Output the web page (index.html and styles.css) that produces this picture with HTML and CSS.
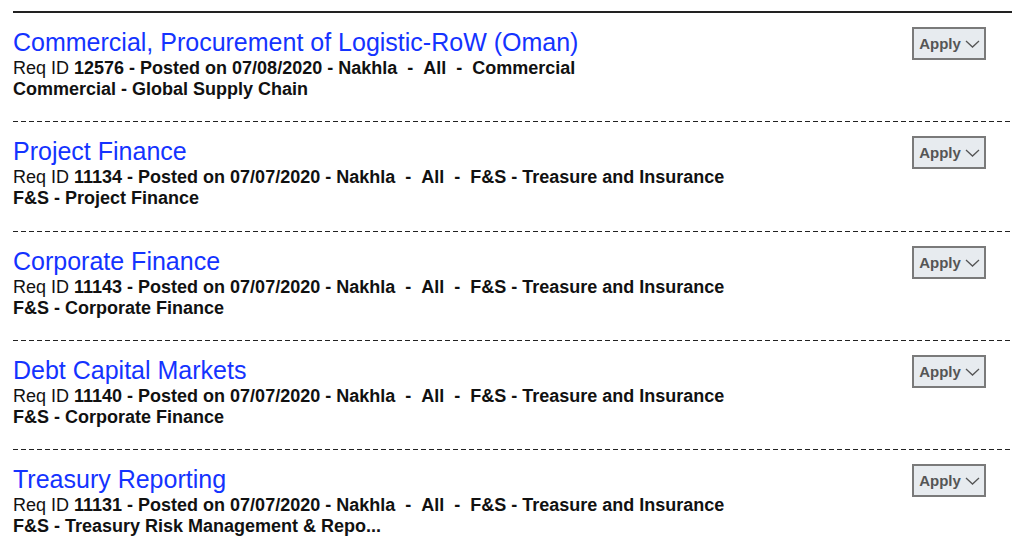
FILE: index.html
```html
<!DOCTYPE html>
<html>
<head>
<meta charset="utf-8">
<link rel="stylesheet" href="styles.css">
</head>
<body>
<ul class="jobs">
  <li class="job">
    <div class="info">
      <a class="title" href="#">Commercial, Procurement of Logistic-RoW (Oman)</a>
      <div class="meta">Req ID <b>12576 - Posted on 07/08/2020 - Nakhla &nbsp;- &nbsp;All &nbsp;- &nbsp;Commercial</b></div>
      <div class="meta"><b>Commercial - Global Supply Chain</b></div>
    </div>
    <button class="apply">Apply <svg class="chev" width="15" height="8" viewBox="0 0 15 8"><path d="M1 1 L7.5 7 L14 1" fill="none" stroke="#555" stroke-width="1.3"/></svg></button>
  </li>
  <li class="job">
    <div class="info">
      <a class="title" href="#">Project Finance</a>
      <div class="meta">Req ID <b>11134 - Posted on 07/07/2020 - Nakhla &nbsp;- &nbsp;All &nbsp;- &nbsp;F&amp;S - Treasure and Insurance</b></div>
      <div class="meta"><b>F&amp;S - Project Finance</b></div>
    </div>
    <button class="apply">Apply <svg class="chev" width="15" height="8" viewBox="0 0 15 8"><path d="M1 1 L7.5 7 L14 1" fill="none" stroke="#555" stroke-width="1.3"/></svg></button>
  </li>
  <li class="job">
    <div class="info">
      <a class="title" href="#">Corporate Finance</a>
      <div class="meta">Req ID <b>11143 - Posted on 07/07/2020 - Nakhla &nbsp;- &nbsp;All &nbsp;- &nbsp;F&amp;S - Treasure and Insurance</b></div>
      <div class="meta"><b>F&amp;S - Corporate Finance</b></div>
    </div>
    <button class="apply">Apply <svg class="chev" width="15" height="8" viewBox="0 0 15 8"><path d="M1 1 L7.5 7 L14 1" fill="none" stroke="#555" stroke-width="1.3"/></svg></button>
  </li>
  <li class="job">
    <div class="info">
      <a class="title" href="#">Debt Capital Markets</a>
      <div class="meta">Req ID <b>11140 - Posted on 07/07/2020 - Nakhla &nbsp;- &nbsp;All &nbsp;- &nbsp;F&amp;S - Treasure and Insurance</b></div>
      <div class="meta"><b>F&amp;S - Corporate Finance</b></div>
    </div>
    <button class="apply">Apply <svg class="chev" width="15" height="8" viewBox="0 0 15 8"><path d="M1 1 L7.5 7 L14 1" fill="none" stroke="#555" stroke-width="1.3"/></svg></button>
  </li>
  <li class="job">
    <div class="info">
      <a class="title" href="#">Treasury Reporting</a>
      <div class="meta">Req ID <b>11131 - Posted on 07/07/2020 - Nakhla &nbsp;- &nbsp;All &nbsp;- &nbsp;F&amp;S - Treasure and Insurance</b></div>
      <div class="meta"><b>F&amp;S - Treasury Risk Management &amp; Repo...</b></div>
    </div>
    <button class="apply">Apply <svg class="chev" width="15" height="8" viewBox="0 0 15 8"><path d="M1 1 L7.5 7 L14 1" fill="none" stroke="#555" stroke-width="1.3"/></svg></button>
  </li>
</ul>
</body>
</html>
```
FILE: styles.css
```css
html, body {
  margin: 0;
  padding: 0;
  background: #fff;
}
body {
  padding: 11px 12px 0 13px;
  font-family: "Liberation Sans", Arial, Helvetica, sans-serif;
  color: #111;
}
.jobs {
  list-style: none;
  margin: 0;
  padding: 0;
  border-top: 2px solid #222;
}
.job {
  display: flex;
  justify-content: space-between;
  align-items: flex-start;
  padding: 13px 26px 22.3px 0;
  background: linear-gradient(to right, #222 5px, transparent 5px) repeat-x;
  background-size: 8px 1px;
  background-position: 0 100%;
}
.job:last-child {
  background: none;
}
.info {
  display: flex;
  flex-direction: column;
}
.title {
  font-size: 25px;
  line-height: 32px;
  color: #1433ff;
  text-decoration: none;
}
.meta {
  font-size: 18px;
  line-height: 21px;
  color: #111;
}
.meta b {
  font-weight: 700;
}
.apply {
  margin-top: 1px;
  width: 74px;
  height: 33px;
  border: 2px solid #7a7a7a;
  background: #e7ebef;
  color: #555;
  font-family: "Liberation Sans", Arial, Helvetica, sans-serif;
  font-weight: 700;
  font-size: 15px;
  padding: 0 0 0 1px;
  display: flex;
  align-items: center;
  justify-content: center;
  gap: 4px;
}
.chev {
  display: block;
  margin-top: 1px;
}
```
